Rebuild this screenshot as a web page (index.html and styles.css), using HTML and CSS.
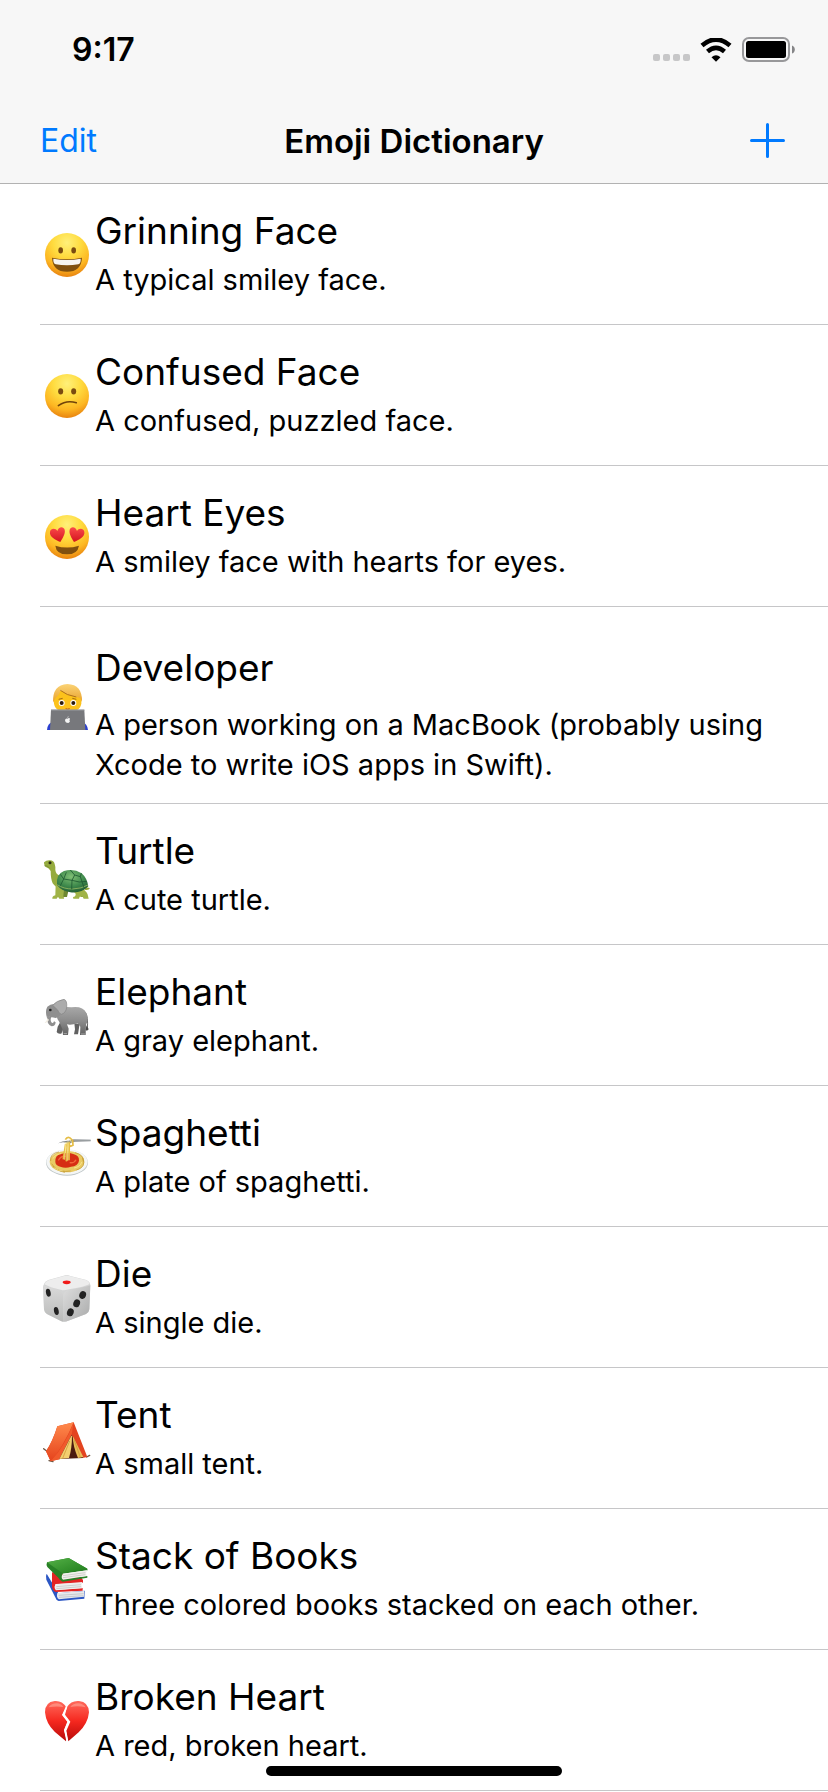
FILE: index.html
```html
<!DOCTYPE html>
<html lang="en">
<head>
<meta charset="utf-8">
<meta name="viewport" content="width=device-width, initial-scale=1">
<title>Emoji Dictionary</title>
<link rel="stylesheet" href="styles.css">
</head>
<body>
<svg class="defs" aria-hidden="true">
  <defs>
    <radialGradient id="face" cx=".5" cy=".22" r=".78">
      <stop offset="0" stop-color="#fff07a"/><stop offset=".4" stop-color="#ffdc40"/><stop offset=".75" stop-color="#fdb722"/><stop offset="1" stop-color="#e88310"/>
    </radialGradient>
    <linearGradient id="heart" x1="0" y1="0" x2="0" y2="1">
      <stop offset="0" stop-color="#ff6a5c"/><stop offset=".5" stop-color="#f5281f"/><stop offset="1" stop-color="#b80a0a"/>
    </linearGradient>
    <linearGradient id="eye-heart" x1="0" y1="0" x2="0" y2="1">
      <stop offset="0" stop-color="#fb4a4a"/><stop offset="1" stop-color="#d3141f"/>
    </linearGradient>
    <linearGradient id="hair" x1="0" y1="0" x2="0" y2="1">
      <stop offset="0" stop-color="#fbd376"/><stop offset="1" stop-color="#e8a02a"/>
    </linearGradient>
    <radialGradient id="shell" cx=".45" cy=".3" r=".7">
      <stop offset="0" stop-color="#7fbf74"/><stop offset=".6" stop-color="#3f8a4c"/><stop offset="1" stop-color="#235f35"/>
    </radialGradient>
    <linearGradient id="hide" x1="0" y1="0" x2="0" y2="1">
      <stop offset="0" stop-color="#a8a8a8"/><stop offset=".5" stop-color="#8b8b8b"/><stop offset="1" stop-color="#636363"/>
    </linearGradient>
    <linearGradient id="die-left" x1="0" y1="0" x2="0" y2="1">
      <stop offset="0" stop-color="#dadada"/><stop offset="1" stop-color="#b9bab9"/>
    </linearGradient>
    <linearGradient id="die-right" x1="0" y1="0" x2="1" y2="1">
      <stop offset="0" stop-color="#dedede"/><stop offset="1" stop-color="#a9aaaa"/>
    </linearGradient>
    <linearGradient id="canvas" x1="0" y1="0" x2="0" y2="1">
      <stop offset="0" stop-color="#ff8a4c"/><stop offset="1" stop-color="#e5421c"/>
    </linearGradient>
    <linearGradient id="green" x1="0" y1="0" x2="1" y2="1">
      <stop offset="0" stop-color="#55b147"/><stop offset="1" stop-color="#1f7d1c"/>
    </linearGradient>
  </defs>
</svg>

<header class="top">
  <div class="status">
    <span class="time">9:17</span>
    <div class="indicators">
      <svg width="37" height="8" viewBox="0 0 37 8" fill="#c7c7c8" aria-label="No signal"><rect width="7" height="7" rx="2"/><rect x="10" width="7" height="7" rx="2"/><rect x="20" width="7" height="7" rx="2"/><rect x="30" width="7" height="7" rx="2"/></svg>
      <svg class="wifi" width="32" height="24" viewBox="0 0 32 24" aria-label="Wi-Fi"><path d="M2 7.500Q16-4.500 30 7.500" fill="none" stroke="#000" stroke-width="4.600"/><path d="M7.500 13.500Q16 6.300 24.500 13.500" fill="none" stroke="#000" stroke-width="4.600"/><path d="M11.500 19.200Q16 15.400 20.500 19.200L16 23.800Z"/></svg>
      <svg class="battery" width="53" height="25" viewBox="0 0 53 25" aria-label="Battery full"><rect x="1" y="1" width="46" height="23" rx="6" fill="none" stroke="#98989a" stroke-width="2"/><rect x="4" y="4" width="40" height="17" rx="2.500"/><path d="M50 8.500q2.800 1 2.800 4t-2.800 4Z" fill="#858587"/></svg>
    </div>
  </div>
  <nav class="nav">
    <button class="nav-button edit" type="button">Edit</button>
    <h1 class="heading">Emoji Dictionary</h1>
    <button class="nav-button add" type="button" aria-label="Add"><svg width="35" height="35" viewBox="0 0 35 35"><path d="M17.500 1.500v32M1.500 17.500h32" stroke="#007aff" stroke-width="3" stroke-linecap="round"/></svg></button>
  </nav>
</header>

<main>
<ul class="list">
  <li class="row">
    <svg class="emoji" viewBox="39 93 144 144" aria-hidden="true">
      <circle cx="111" cy="165" r="66" fill="url(#face)"/>
      <ellipse cx="92" cy="151" rx="7" ry="9.500" fill="#7a4b10"/><ellipse cx="131" cy="151" rx="7" ry="9.500" fill="#7a4b10"/>
      <path d="M66 173Q111 182 156 173Q154 215 111 215T66 173Z" fill="#80500f"/>
      <path d="M70 176Q111 184 152 176Q153 190 145 193Q111 199 77 193Q69 190 70 176Z" fill="#f6f5f1"/>
    </svg>
    <div class="copy"><h2 class="name">Grinning Face</h2><p class="about">A typical smiley face.</p></div>
  </li>
  <li class="row">
    <svg class="emoji" viewBox="39 96 144 144" aria-hidden="true">
      <circle cx="111" cy="168" r="66" fill="url(#face)"/>
      <ellipse cx="92" cy="154" rx="7.500" ry="9.500" fill="#7a4b10"/><ellipse cx="131" cy="154" rx="7.500" ry="9.500" fill="#7a4b10"/>
      <path d="M85 197Q109 179 139 188" fill="none" stroke="#704209" stroke-width="4.500" stroke-linecap="round"/>
    </svg>
    <div class="copy"><h2 class="name">Confused Face</h2><p class="about">A confused, puzzled face.</p></div>
  </li>
  <li class="row">
    <svg class="emoji" viewBox="39 519 144 144" aria-hidden="true">
      <circle cx="111" cy="591" r="66" fill="url(#face)"/>
      <path d="M91 606C77 600 57 590 60 575C63 563 78 565 82 573C85 559 101 558 104 569C107 580 98 594 91 606Z" fill="url(#eye-heart)"/>
      <path d="M132 606C146 600 166 590 163 575C160 563 145 565 141 573C138 559 122 558 119 569C116 580 125 594 132 606Z" fill="url(#eye-heart)"/>
      <path d="M76 617Q111 628 147 617Q143 643 111 643T76 617Z" fill="#80500f"/>
    </svg>
    <div class="copy"><h2 class="name">Heart Eyes</h2><p class="about">A smiley face with hearts for eyes.</p></div>
  </li>
  <li class="row row-tall">
    <svg class="emoji" viewBox="39 159 144 144" aria-hidden="true">
      <path d="M51 300Q52 280 68 275H156Q172 280 174 300Z" fill="#2b3fd0"/>
      <path d="M72 205Q72 180 113 180T154 205V220Q152 246 113 246T72 220Z" fill="#fcc21b"/>
      <circle cx="95" cy="219" r="9" fill="#fff"/><circle cx="130" cy="219" r="9" fill="#fff"/>
      <circle cx="95" cy="219" r="6" fill="#2c1a0c"/><circle cx="130" cy="219" r="6" fill="#2c1a0c"/>
      <path d="M86 208l12-3M127 205l12 3" stroke="#a26a14" stroke-width="3"/>
      <path d="M107 236q6 3 12 0" stroke="#b2541c" stroke-width="3" fill="none"/>
      <path d="M69 218Q67 164 112 162Q158 164 156 216L150 204Q141 201 128 198Q108 194 91 181Q88 196 77 203Z" fill="url(#hair)"/>
      <path d="M91 181Q109 196 139 201" stroke="#ae701b" stroke-width="3" fill="none"/>
      <path d="M63 239H163L166 300H60Z" fill="#77787c"/><path d="M63 240H163" stroke="#9a9ba0" stroke-width="3"/>
      <path d="M112 266q7-4 8 1-4 4 0 7-4 8-8 4-6 2-7-7 1-7 7-5zM112 264q0-4 4-5 0 4-4 5z" fill="#f4f4f4"/>
    </svg>
    <div class="copy"><h2 class="name">Developer</h2><p class="about">A person working on a MacBook (probably using Xcode to write iOS apps in Swift).</p></div>
  </li>
  <li class="row">
    <svg class="emoji" viewBox="39 93 144 144" aria-hidden="true">
      <path d="M163 197Q174 205 180 204Q176 212 164 209Z" fill="#92a83a"/>
      <path d="M101 200L98 228Q97 231 101 231H111L117 205ZM145 205L153 231H164L162 203Z" fill="#6f8832"/>
      <path d="M42 127Q48 121 58 121Q71 120 74 132Q77 140 76 150Q78 163 87 166L96 207Q78 205 68 190Q62 176 62 153Q58 144 46 140Q41 134 42 127Z" fill="#95ab3e"/>
      <path d="M43 137Q54 136 59 145" fill="none" stroke="#6c822b" stroke-width="2"/>
      <circle cx="60" cy="128" r="4.500" fill="#2b2b16"/>
      <path d="M77 195Q96 190 102 203L100 230Q104 233 102 236H88L84 230L80 236H67Q66 229 76 226ZM129 213L160 208Q173 218 174 228L176 236H161L158 230H149L147 236H130L129 231Q138 229 137 221Z" fill="#a0b347"/>
      <path d="M81 195Q77 163 102 153Q131 145 155 160Q171 174 175 199Q153 221 121 217Q94 213 81 195Z" fill="url(#shell)"/>
      <path d="M82 194Q100 207 128 207Q155 206 174 195" fill="none" stroke="#86ae5d" stroke-width="3"/>
      <path d="M91 163L101 177L126 181L134 165L121 150M101 177L91 197M126 181L125 208M134 165L151 170L162 203M151 170L154 160M101 177L109 157M126 181L148 186L170 184" fill="none" stroke="#1e5931" stroke-width="2.500"/>
    </svg>
    <div class="copy"><h2 class="name">Turtle</h2><p class="about">A cute turtle.</p></div>
  </li>
  <li class="row">
    <svg class="emoji" viewBox="39 516 144 144" aria-hidden="true">
      <path d="M166 577Q175 590 172 626" fill="none" stroke="#666" stroke-width="3"/><path d="M170 616l-4 14 5 2 5-4z" fill="#494949"/>
      <path d="M91 606L83 620L80 636Q83 643 94 641L105 615ZM133 610L135 628L132 643H144L149 611Z" fill="#616161"/>
      <path d="M81 570Q98 558 124 562Q158 557 169 579Q177 596 168 615L167 645H150L151 620L143 609Q125 616 111 613L116 626L114 645H99L97 627L88 606Q77 596 81 570Z" fill="url(#hide)"/>
      <path d="M52 560Q65 548 83 554L94 573Q94 589 77 594Q66 591 64 592Q59 602 66 609Q71 610 72 604L77 607Q76 619 65 619Q51 613 52 596Q46 582 49 568Z" fill="#8f8f8f"/>
      <path d="M68 556Q79 542 102 538Q112 541 110 562Q108 579 94 583Q86 580 83 570Z" fill="#acacac" stroke="#838383" stroke-width="2"/>
      <path d="M53 595Q50 604 44 608Q49 611 57 600Z" fill="#f1ece1"/>
      <circle cx="61" cy="570" r="4" fill="#242424"/>
      <path d="M51 592q4-3 8-2M101 641h10M153 642h12" stroke="#c5c5c5" stroke-width="2"/>
    </svg>
    <div class="copy"><h2 class="name">Elephant</h2><p class="about">A gray elephant.</p></div>
  </li>
  <li class="row">
    <svg class="emoji" viewBox="39 99 144 144" aria-hidden="true">
      <ellipse cx="111" cy="188" rx="63" ry="39" fill="#bfc6c8"/><ellipse cx="111" cy="186" rx="62" ry="38" fill="#f4f6f6"/>
      <ellipse cx="111" cy="185" rx="52" ry="32" fill="#e9ca63"/>
      <g fill="none" stroke="#bd912b" stroke-width="2"><path d="M62 183Q59 160 87 156M68 199Q90 219 122 213M65 191Q78 213 105 217M158 174Q170 202 139 210M135 158Q162 164 160 184"/><path d="M68 176q8-13 25-15M73 203q12 10 25 10M132 204q20-4 23-18" stroke="#fff09b"/></g>
      <path d="M76 186Q75 165 92 163Q112 154 132 163Q148 167 147 182Q144 199 123 200Q107 206 91 200Q77 197 76 186Z" fill="#d62e13"/>
      <path d="M85 181q8-14 22-12M119 188q14 2 19-9" stroke="#f2653a" stroke-width="4" fill="none"/>
      <path d="M84 130Q97 121 116 122L132 118L182 119V124L134 125L121 130L99 127Z" fill="#85898c"/><path d="M132 120h50" stroke="#c4c8ca" stroke-width="2"/>
      <path d="M106 119Q111 110 119 113L128 121L129 136L122 139L117 134V181M107 132L100 178M112 128L109 184M118 125L117 181" fill="none" stroke="#e5bd45" stroke-width="5"/>
      <path d="M108 126L104 179M114 124L113 182M120 118l5 10" fill="none" stroke="#ffec91" stroke-width="2.500"/>
    </svg>
    <div class="copy"><h2 class="name">Spaghetti</h2><p class="about">A plate of spaghetti.</p></div>
  </li>
  <li class="row">
    <svg class="emoji" viewBox="39 522 144 144" aria-hidden="true">
      <path d="M42 552Q44 544 55 540L101 527Q111 523 121 528L169 540Q180 545 181 555L178 628Q177 638 168 642L114 662Q103 667 92 662L51 642Q43 637 42 628L39 562Z" fill="#d4d5d5"/>
      <path d="M40 556L91 572Q99 576 99 586L101 665Q96 665 91 662L51 642Q43 637 42 628Z" fill="url(#die-left)"/>
      <path d="M181 556Q173 560 116 570Q101 573 100 587L101 665Q109 665 115 662L168 642Q177 638 178 628Z" fill="url(#die-right)"/>
      <path d="M43 553Q45 545 56 541L102 528Q111 525 121 529L169 541Q177 544 179 552Q165 560 117 568Q106 571 98 571Q60 563 43 553Z" fill="#ededed"/>
      <ellipse cx="110" cy="547" rx="12" ry="5.500" fill="#f01b19"/>
      <g fill="#222"><ellipse cx="55" cy="578" rx="7" ry="12" transform="rotate(-12 55 578)"/><ellipse cx="79" cy="633" rx="7" ry="12" transform="rotate(-12 79 633)"/><ellipse cx="158" cy="585" rx="10" ry="12" transform="rotate(20 158 585)"/><ellipse cx="140" cy="610" rx="10" ry="12" transform="rotate(20 140 610)"/><ellipse cx="121" cy="637" rx="10" ry="12" transform="rotate(20 121 637)"/></g>
    </svg>
    <div class="copy"><h2 class="name">Die</h2><p class="about">A single die.</p></div>
  </li>
  <li class="row">
    <svg class="emoji" viewBox="39 75 144 144" aria-hidden="true">
      <path d="M41 176l9 7M57 212l12 3M170 201l9-5" stroke="#6e5542" stroke-width="4" stroke-linecap="round"/>
      <path d="M131 97L172 201L157 204L121 139L91 207L62 214L48 184Q68 154 82 109Z" fill="#e34420"/>
      <path d="M131 97L82 109Q70 151 48 184L62 214Q98 174 131 97Z" fill="url(#canvas)"/>
      <path d="M131 97Q104 170 62 214L91 207L125 134Z" fill="#f05a2c"/>
      <path d="M125 134L88 207L159 204Z" fill="#4b1a10"/>
      <path d="M124 137L88 207L117 204Q126 174 126 137Z" fill="#f3cf6f"/><path d="M128 137Q129 170 144 204L160 201Z" fill="#e9bd57"/>
      <path d="M119 153L98 205M132 148L151 202" stroke="#c89333" stroke-width="2"/>
    </svg>
    <div class="copy"><h2 class="name">Tent</h2><p class="about">A small tent.</p></div>
  </li>
  <li class="row">
    <svg class="emoji" viewBox="39 498 144 144" aria-hidden="true">
      <path d="M50 551L85 610L164 602L163 626L86 633Q78 630 75 620L49 569Q46 558 50 551Z" fill="#2b56c4"/>
      <path d="M82 609L162 603L162 620L87 628Q78 622 82 609Z" fill="#e7e9ec"/><path d="M86 616l75-5M87 622l74-5" stroke="#b6babf" stroke-width="2"/>
      <path d="M66 547L152 559L159 571V578L77 582Q72 588 77 600L158 594V602L77 606Q68 602 66 590Z" fill="#e42424"/>
      <path d="M77 583L157 576Q152 585 157 595L78 601Q70 594 77 583Z" fill="#eeeeed"/><path d="M79 590l74-6M79 596l74-6" stroke="#bebebe" stroke-width="2"/>
      <path d="M51 517L116 504L172 536L173 541L98 551Q94 559 99 568L172 558V563L98 575Q90 572 85 563L52 531Q48 524 51 517Z" fill="#288126"/>
      <path d="M51 517L116 504L172 536L97 549Z" fill="url(#green)"/>
      <path d="M99 551L171 541Q166 549 170 558L99 569Q91 561 99 551Z" fill="#f1f1ed"/><path d="M99 557l67-9M99 563l67-9" stroke="#bebfbb" stroke-width="2"/>
    </svg>
    <div class="copy"><h2 class="name">Stack of Books</h2><p class="about">Three colored books stacked on each other.</p></div>
  </li>
  <li class="row">
    <svg class="emoji" viewBox="39 111 144 144" aria-hidden="true">
      <path d="M109 141Q96 121 74 123Q45 126 45 157Q48 191 74 215L108 244L110 239L102 210L112 185L96 165Z" fill="url(#heart)"/>
      <path d="M111 141Q123 121 147 123Q176 126 177 157Q174 190 146 217L115 244L109 212L121 185L105 164Z" fill="url(#heart)"/>
      <path d="M110 139L100 164L116 185L105 211L112 246" fill="none" stroke="#fff" stroke-width="5"/>
      <path d="M56 142Q63 130 81 130Q93 130 100 141Q79 137 56 142ZM121 141Q129 130 144 130Q160 131 167 142Q144 136 121 141Z" fill="#ffa292" opacity=".65"/>
    </svg>
    <div class="copy"><h2 class="name">Broken Heart</h2><p class="about">A red, broken heart.</p></div>
  </li>
</ul>
</main>
<div class="home-bar"></div>
</body>
</html>
```
FILE: styles.css
```css
* {
  box-sizing: border-box;
}

body {
  margin: 0;
  background: #fff;
  color: #000;
  font-family: Inter, "Liberation Sans", sans-serif;
}

.defs {
  position: absolute;
  width: 0;
  height: 0;
}

.top {
  background: #f7f7f7;
  border-bottom: 1px solid #b2b2b2;
}

.status {
  display: flex;
  justify-content: space-between;
  height: 96px;
  padding: 30px 33px 0 72px;
}

.time {
  font-size: 32px;
  font-weight: 600;
  line-height: 40px;
}

.indicators {
  display: flex;
  align-items: flex-end;
  gap: 10px;
  height: 32px;
}

.nav {
  display: grid;
  grid-template-columns: 1fr auto 1fr;
  align-items: center;
  height: 87px;
  padding: 2px 40px 0;
}

.nav-button {
  padding: 0;
  border: 0;
  background: none;
  color: #007aff;
  font: inherit;
  font-size: 32px;
  line-height: 40px;
}

.edit {
  justify-self: start;
}

.add {
  display: flex;
  justify-self: end;
  padding-right: 3px;
}

.heading {
  margin: 0;
  font-size: 33px;
  font-weight: 600;
  line-height: 40px;
}

.list {
  margin: 0;
  padding: 0 0 0 40px;
  list-style: none;
}

.row {
  display: flex;
  align-items: center;
  gap: 4px;
  padding: 23px 16px 24px 3px;
  border-bottom: 1px solid #c6c6c8;
}

.emoji {
  flex: none;
  width: 48px;
  height: 48px;
  margin-top: 3px;
}

.copy {
  display: flex;
  flex-direction: column;
  gap: 5px;
}

.name,
.about {
  margin: 0;
  font-weight: 400;
}

.name {
  font-size: 37px;
  line-height: 48px;
}

.about {
  font-size: 29px;
  line-height: 40px;
}

.row-tall {
  padding-top: 37px;
  padding-bottom: 18px;
}

.row-tall .copy {
  gap: 13px;
}

.row-tall .emoji {
  margin-top: 0;
  margin-bottom: 16px;
}

.home-bar {
  position: fixed;
  bottom: 16px;
  left: 50%;
  width: 296px;
  height: 10px;
  border-radius: 5px;
  background: #000;
  transform: translateX(-50%);
}
```
